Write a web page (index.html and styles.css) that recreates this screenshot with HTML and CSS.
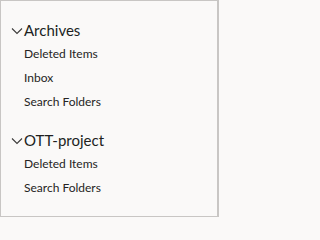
FILE: index.html
```html
<!DOCTYPE html>
<html>
<head>
<meta charset="utf-8">
<link rel="stylesheet" href="styles.css">
</head>
<body>
<div class="panel">
  <div class="group">
    <div class="header">
      <svg class="chev" width="12" height="8" viewBox="0 0 12 8"><path d="M1 1.5 L6 6.5 L11 1.5" fill="none" stroke="#3b3a39" stroke-width="1.1"/></svg>
      <span class="title">Archives</span>
    </div>
    <div class="item">Deleted Items</div>
    <div class="item">Inbox</div>
    <div class="item">Search Folders</div>
  </div>
  <div class="group">
    <div class="header">
      <svg class="chev" width="12" height="8" viewBox="0 0 12 8"><path d="M1 1.5 L6 6.5 L11 1.5" fill="none" stroke="#3b3a39" stroke-width="1.1"/></svg>
      <span class="title">OTT-project</span>
    </div>
    <div class="item">Deleted Items</div>
    <div class="item">Search Folders</div>
  </div>
</div>
</body>
</html>
```
FILE: styles.css
```css
html, body {
  margin: 0;
  padding: 0;
  background: #faf9f8;
}
.panel {
  box-sizing: border-box;
  width: 219px;
  height: 217px;
  border: 1px solid #c8c6c4;
  border-right-width: 2px;
  background: #faf9f8;
  padding-top: 17px;
  display: flex;
  flex-direction: column;
  gap: 14px;
  font-family: "Lato", "Open Sans", sans-serif;
  color: #323130;
}
.group {
  display: flex;
  flex-direction: column;
}
.header {
  height: 24px;
  display: flex;
  align-items: center;
  padding-left: 10px;
}
.chev {
  margin-right: 1px;
  margin-top: 1px;
}
.title {
  font-size: 15px;
  color: #201f1e;
}
.item {
  height: 24px;
  line-height: 24px;
  padding-left: 23px;
  font-size: 12px;
  color: #252423;
}
```
